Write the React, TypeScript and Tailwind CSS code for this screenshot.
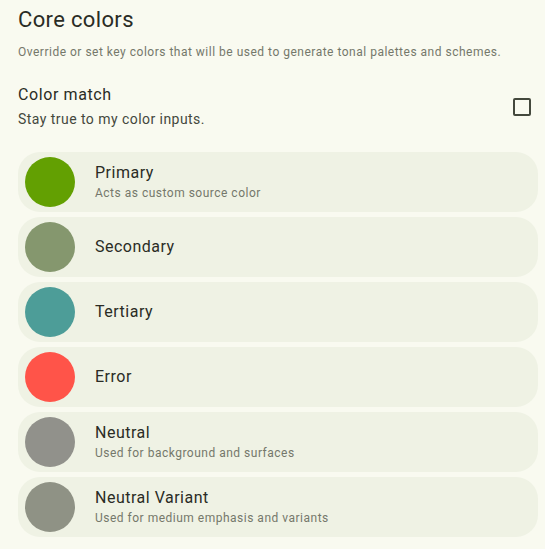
import React, { useState } from 'react';

type CoreColor = {
    name: string;
    description?: string;
    color: string;
};

const coreColors: CoreColor[] = [
    { name: 'Primary', description: 'Acts as custom source color', color: '#63a002' },
    { name: 'Secondary', color: '#85976e' },
    { name: 'Tertiary', color: '#4d9d98' },
    { name: 'Error', color: '#ff5449' },
    { name: 'Neutral', description: 'Used for background and surfaces', color: '#91918b' },
    { name: 'Neutral Variant', description: 'Used for medium emphasis and variants', color: '#8f9285' },
];

const ColorRow: React.FC<{ item: CoreColor }> = ({ item }) => (
    <div className="flex items-center h-[60px] rounded-[22px] bg-[#eff2e4] pl-[7px] pr-4">
        <div className="w-[50px] h-[50px] rounded-full shrink-0" style={{ backgroundColor: item.color }} />
        <div className="ml-5 flex flex-col">
            <span className="text-[16px] leading-[22px] text-[#2a2c25] tracking-[0.5px]">{item.name}</span>
            {item.description && (
                <span className="mt-[1px] text-[12px] leading-[17px] text-[#75786b] tracking-[0.5px]">{item.description}</span>
            )}
        </div>
    </div>
);

export default function App() {
    const [match, setMatch] = useState(false);

    return (
        <div className="w-[545px] h-[549px] bg-[#f9faf0] font-['Roboto',sans-serif] overflow-hidden">
            <div className="pl-[18px] pr-[7px] pt-[5px]">
                {/* Header */}
                <h2 className="text-[22px] leading-[30px] text-[#2a2c25] tracking-[0.35px]">Core colors</h2>
                <p className="mt-[9px] text-[12px] leading-[16px] text-[#75786b] tracking-[0.5px]">
                    Override or set key colors that will be used to generate tonal palettes and schemes.
                </p>

                {/* Color match toggle */}
                <div className="mt-[24px] flex items-center justify-between">
                    <div className="flex flex-col">
                        <span className="text-[16px] leading-[22px] text-[#2a2c25] tracking-[0.6px]">Color match</span>
                        <span className="mt-[3px] text-[14px] leading-[20px] text-[#44483d] tracking-[0.45px]">Stay true to my color inputs.</span>
                    </div>
                    <button
                        onClick={() => setMatch(!match)}
                        className="w-[18px] h-[18px] border-2 border-[#44483d] rounded-[2px] mr-[7px] flex items-center justify-center"
                    >
                        {match && <span className="w-2 h-2 bg-[#44483d]" />}
                    </button>
                </div>

                {/* Core color list */}
                <div className="mt-[23px] flex flex-col gap-[5px]">
                    {coreColors.map((c) => (
                        <ColorRow key={c.name} item={c} />
                    ))}
                </div>
            </div>
        </div>
    );
}
